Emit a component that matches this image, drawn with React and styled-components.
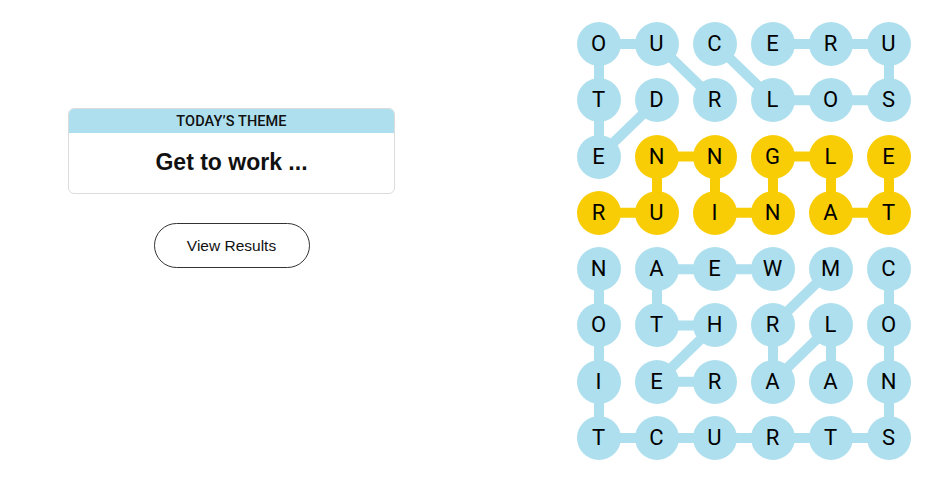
import React from "react";
import styled, { createGlobalStyle } from "styled-components";

const Global = createGlobalStyle`
  html, body { margin: 0; padding: 0; background: #fff; }
  body { font-family: "Liberation Sans", Arial, sans-serif; color: #000; }
`;

const COL = 58;
const ROW = 56.29;
const SIZE = 44;

const BLUE = "#aedfee";
const YELLOW = "#f8cd05";

const letters = [
  "OUCERU",
  "TDRLOS",
  "ENNGLE",
  "RUINAT",
  "NAEWMC",
  "OTHRLO",
  "IERAAN",
  "TCURTS",
];

const words = [
  { color: BLUE, path: [[1, 1], [2, 0], [1, 0], [0, 0], [0, 1], [1, 2]] },
  { color: BLUE, path: [[0, 2], [1, 3], [1, 4], [1, 5], [0, 5], [0, 4], [0, 3]] },
  {
    color: YELLOW,
    path: [[3, 0], [3, 1], [2, 1], [2, 2], [3, 2], [3, 3], [2, 3], [2, 4], [3, 4], [3, 5], [2, 5]],
  },
  { color: BLUE, path: [[4, 3], [4, 2], [4, 1], [5, 1], [5, 2], [6, 1], [6, 2]] },
  { color: BLUE, path: [[6, 4], [5, 4], [6, 3], [5, 3], [4, 4]] },
  {
    color: BLUE,
    path: [[4, 5], [5, 5], [6, 5], [7, 5], [7, 4], [7, 3], [7, 2], [7, 1], [7, 0], [6, 0], [5, 0], [4, 0]],
  },
];

const colorAt = {};
words.forEach((w) => w.path.forEach(([r, c]) => (colorAt[`${r}-${c}`] = w.color)));

const Page = styled.div`
  display: flex;
  align-items: flex-start;
  padding-left: 68px;
  height: 499px;
  box-sizing: border-box;
`;

const LeftColumn = styled.div`
  width: 327px;
  margin-top: 108px;
  display: flex;
  flex-direction: column;
  align-items: center;
`;

const ThemeCard = styled.div`
  width: 100%;
  border: 1px solid #dcdcdc;
  border-radius: 6px;
  overflow: hidden;
  box-sizing: border-box;
`;

const ThemeHeader = styled.div`
  background: ${BLUE};
  height: 24px;
  display: flex;
  align-items: center;
  justify-content: center;
  font-family: Roboto, "Liberation Sans", sans-serif;
  font-weight: 500;
  font-size: 14.5px;
  color: #111;
  letter-spacing: 0.1px;
`;

const ThemeBody = styled.div`
  height: 60px;
  display: flex;
  align-items: center;
  justify-content: center;
  font-family: "Liberation Sans", Arial, sans-serif;
  font-weight: 700;
  font-size: 23px;
  color: #111;
  padding-bottom: 2px;
  box-sizing: border-box;
`;

const ResultsButton = styled.button`
  margin-top: 29px;
  width: 156px;
  height: 45px;
  border: 1px solid #333;
  border-radius: 23px;
  background: #fff;
  font-family: "Liberation Sans", Arial, sans-serif;
  font-size: 15.5px;
  color: #111;
  cursor: pointer;
  padding: 0;
`;

const Board = styled.div`
  position: relative;
  margin-left: 181.5px;
  margin-top: 22px;
  width: ${COL * 5 + SIZE}px;
  height: ${ROW * 7 + SIZE}px;
  display: grid;
  grid-template-columns: repeat(6, ${SIZE}px);
  grid-template-rows: repeat(8, ${SIZE}px);
  column-gap: ${COL - SIZE}px;
  row-gap: ${ROW - SIZE}px;
`;

const Connectors = styled.svg`
  position: absolute;
  left: 0;
  top: 0;
  width: 100%;
  height: 100%;
  pointer-events: none;
`;

const Cell = styled.div`
  position: relative;
  width: ${SIZE}px;
  height: ${SIZE}px;
  border-radius: 50%;
  background: ${(p) => p.$color || "transparent"};
  display: flex;
  align-items: center;
  justify-content: center;
  font-family: Roboto, "Liberation Sans", sans-serif;
  font-size: 22px;
  font-weight: 400;
  color: #000;
  line-height: 1;
`;

const cx = (c) => c * COL + SIZE / 2;
const cy = (r) => r * ROW + SIZE / 2;

export default function App() {
  return (
    <>
      <Global />
      <Page>
        <LeftColumn>
          <ThemeCard>
            <ThemeHeader>TODAY’S THEME</ThemeHeader>
            <ThemeBody>Get to work ...</ThemeBody>
          </ThemeCard>
          <ResultsButton>View Results</ResultsButton>
        </LeftColumn>
        <Board>
          <Connectors>
            {words.map((w, wi) =>
              w.path.slice(1).map(([r, c], i) => {
                const [pr, pc] = w.path[i];
                return (
                  <line
                    key={`${wi}-${i}`}
                    x1={cx(pc)}
                    y1={cy(pr)}
                    x2={cx(c)}
                    y2={cy(r)}
                    stroke={w.color}
                    strokeWidth={10}
                  />
                );
              })
            )}
          </Connectors>
          {letters.map((row, r) =>
            row.split("").map((ch, c) => (
              <Cell key={`${r}-${c}`} $color={colorAt[`${r}-${c}`]}>
                {ch}
              </Cell>
            ))
          )}
        </Board>
      </Page>
    </>
  );
}
